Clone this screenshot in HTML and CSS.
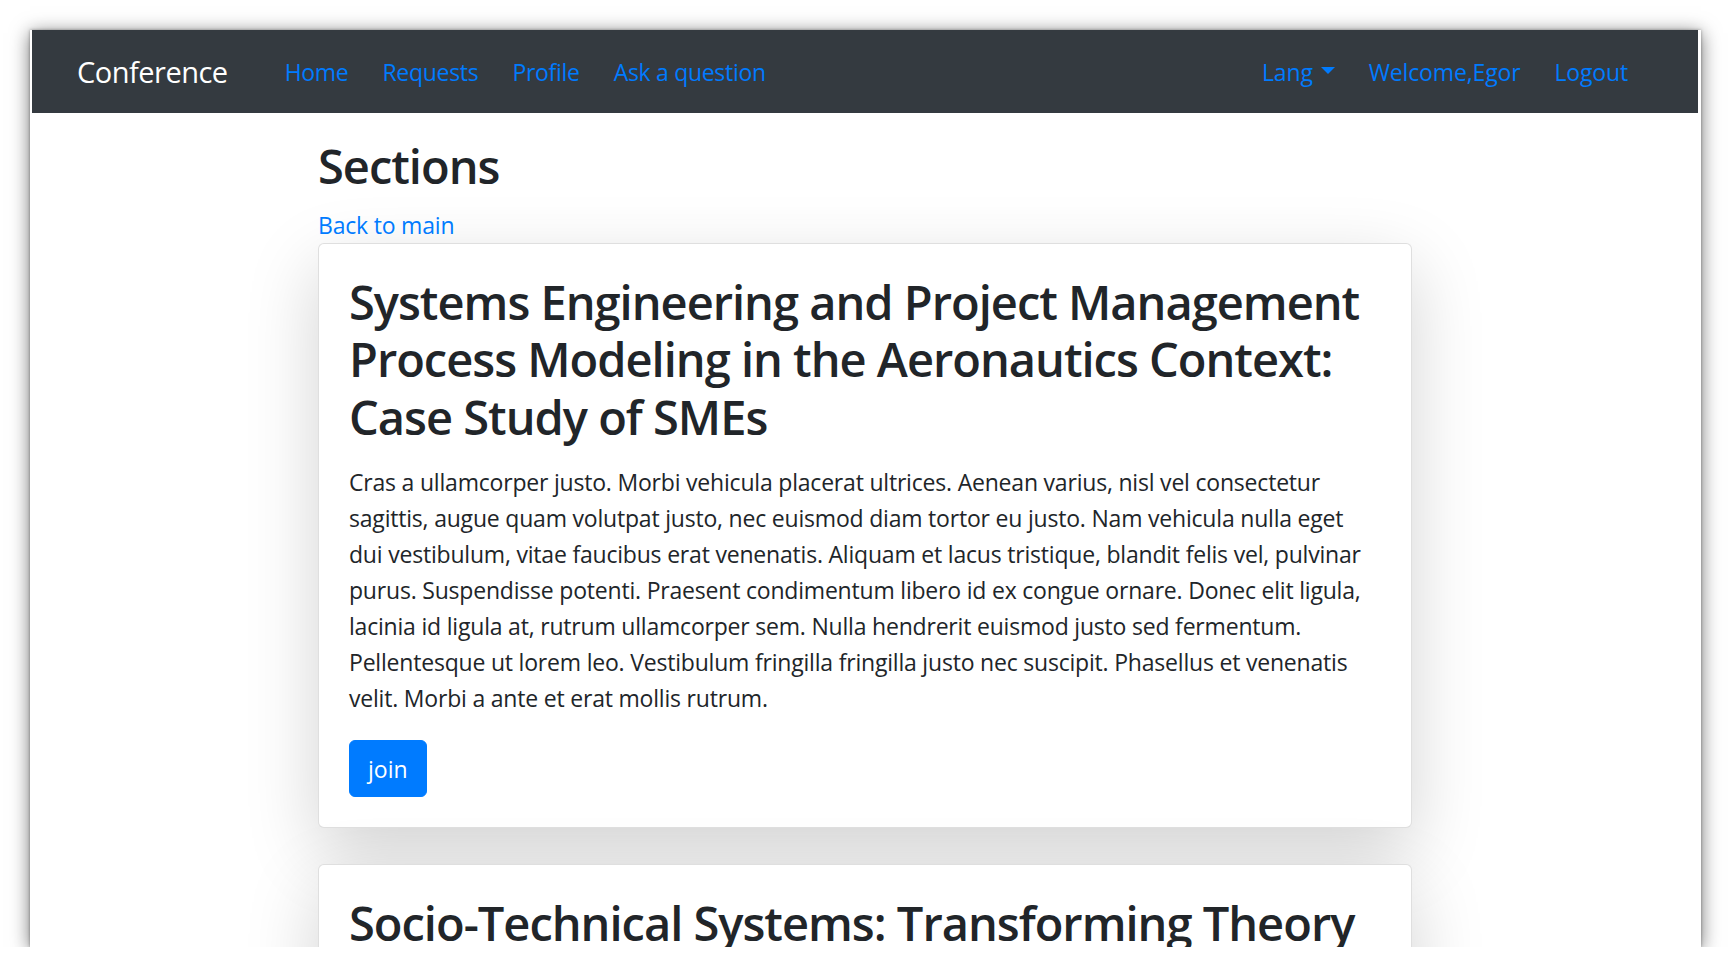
FILE: index.html
```html
<!DOCTYPE html>
<html lang="en">
<head>
<meta charset="utf-8">
<title>Conference — Sections</title>
<link rel="stylesheet" href="styles.css">
</head>
<body>
<div class="window">
  <nav class="navbar">
    <a class="brand" href="#">Conference</a>
    <ul class="nav">
      <li><a class="nav-link" href="#">Home</a></li>
      <li><a class="nav-link" href="#">Requests</a></li>
      <li><a class="nav-link" href="#">Profile</a></li>
      <li><a class="nav-link" href="#">Ask a question</a></li>
    </ul>
    <ul class="nav nav-right">
      <li><a class="nav-link dropdown-toggle" href="#">Lang</a></li>
      <li><a class="nav-link" href="#">Welcome,Egor</a></li>
      <li><a class="nav-link" href="#">Logout</a></li>
    </ul>
  </nav>

  <main class="container">
    <h2 class="page-title">Sections</h2>
    <a class="back-link" href="#">Back to main</a>

    <div class="card">
      <h2 class="card-title">Systems Engineering and Project Management Process Modeling in the Aeronautics Context: Case Study of SMEs</h2>
      <p class="card-text">Cras a ullamcorper justo. Morbi vehicula placerat ultrices. Aenean varius, nisl vel consectetur sagittis, augue quam volutpat justo, nec euismod diam tortor eu justo. Nam vehicula nulla eget dui vestibulum, vitae faucibus erat venenatis. Aliquam et lacus tristique, blandit felis vel, pulvinar purus. Suspendisse potenti. Praesent condimentum libero id ex congue ornare. Donec elit ligula, lacinia id ligula at, rutrum ullamcorper sem. Nulla hendrerit euismod justo sed fermentum. Pellentesque ut lorem leo. Vestibulum fringilla fringilla justo nec suscipit. Phasellus et venenatis velit. Morbi a ante et erat mollis rutrum.</p>
      <a class="btn" href="#">join</a>
    </div>

    <div class="card">
      <h2 class="card-title">Socio-Technical Systems: Transforming Theory into Practice</h2>
      <p class="card-text">Cras a ullamcorper justo. Morbi vehicula placerat ultrices. Aenean varius, nisl vel consectetur sagittis, augue quam volutpat justo, nec euismod diam tortor eu justo.</p>
      <a class="btn" href="#">join</a>
    </div>
  </main>
</div>
</body>
</html>
```

FILE: styles.css
```css
* {
  box-sizing: border-box;
}

html, body {
  margin: 0;
  padding: 0;
  background: #ffffff;
}

body {
  font-family: "Open Sans", "Segoe UI", "Noto Sans", sans-serif;
  font-size: 23px;
  line-height: 36px;
  color: #212529;
}

a {
  text-decoration: none;
  color: #007bff;
}

.window {
  margin: 30px 0 0 30px;
  width: 1671px;
  height: 917px;
  padding: 0 3px 0 2px;
  background: #ffffff;
  overflow: hidden;
  box-shadow: 0 3px 18px rgba(0, 0, 0, 0.55), 0 0 3px rgba(0, 0, 0, 0.35);
}

/* ---------- navbar ---------- */
.navbar {
  display: flex;
  align-items: center;
  height: 83px;
  padding: 0 53px 0 45px;
  background: #343a40;
}

.brand {
  color: #ffffff;
  font-size: 29px;
  line-height: 45px;
  letter-spacing: -0.5px;
  margin-right: 40px;
  white-space: nowrap;
}

.nav {
  display: flex;
  align-items: center;
  list-style: none;
  margin: 0;
  padding: 0;
}

.nav-right {
  margin-left: auto;
}

.nav-link {
  display: block;
  padding: 0 17px;
  color: #007bff;
  font-size: 23px;
  line-height: 36px;
  letter-spacing: -0.3px;
  white-space: nowrap;
}

.nav-right .nav-link {
  letter-spacing: -0.15px;
}

.dropdown-toggle::after {
  content: "";
  display: inline-block;
  margin-left: 8px;
  vertical-align: 6.5px;
  border-top: 7px solid #007bff;
  border-left: 7px solid transparent;
  border-right: 7px solid transparent;
}

/* ---------- content ---------- */
.container {
  width: 1094px;
  margin: 0 auto;
}

.page-title {
  margin: 25px 0 11px;
  font-size: 47px;
  line-height: 57.6px;
  font-weight: 600;
  letter-spacing: -1px;
}

.back-link {
  display: block;
  font-size: 23px;
  line-height: 36px;
  letter-spacing: -0.2px;
}

.card {
  background: #ffffff;
  border: 1px solid rgba(0, 0, 0, 0.125);
  border-radius: 6px;
  padding: 30px;
  margin-bottom: 36px;
  box-shadow: 0 24px 72px rgba(0, 0, 0, 0.175);
}

.card-title {
  margin: 0 0 18px;
  font-size: 47px;
  line-height: 57.6px;
  font-weight: 600;
  letter-spacing: -1px;
}

.card-text {
  margin: 0 0 24px;
  letter-spacing: -0.2px;
}

.btn {
  display: inline-block;
  padding: 9.5px 18px;
  border: 1px solid #007bff;
  border-radius: 6px;
  background: #007bff;
  color: #ffffff;
  font-size: 23px;
  line-height: 36px;
}
```
